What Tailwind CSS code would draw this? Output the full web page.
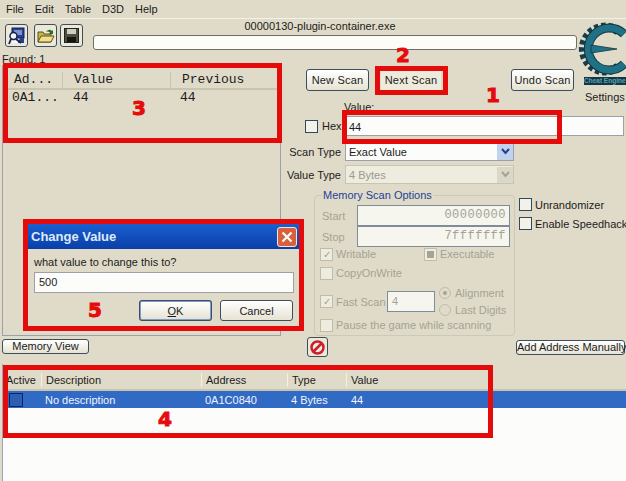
<!DOCTYPE html>
<html lang="en">
<head>
    <meta charset="UTF-8">
    <title>Cheat Engine</title>
    <script src="https://cdn.jsdelivr.net/npm/@tailwindcss/browser@4"></script>
</head>
<body class="bg-[#e0dbc8]">
<div class="relative w-[626px] h-[481px] overflow-hidden flex flex-col bg-[#e0dbc8] text-[11px] leading-[14px] text-[#1c1c1c] font-['Liberation_Sans',sans-serif]">

    <!-- Menu -->
    <div class="flex h-[19px] shrink-0 items-center pl-[6px] gap-[11px] border-b border-[#f4f1e6]">
        <span>File</span><span>Edit</span><span>Table</span><span>D3D</span><span>Help</span>
    </div>

    <!-- Toolbar -->
    <div class="flex h-[33px] shrink-0 pl-[5px]">
        <button class="mt-[5px] w-[23px] h-[23px] flex items-center justify-center rounded-[3px] border border-[#3c4f5e] bg-[#ece9d8]">
            <svg width="18" height="18" viewBox="0 0 18 18"><rect x="4" y="1" width="12" height="10" fill="#24408f" stroke="#121f55"/><rect x="6" y="3" width="8" height="5" fill="#7d90cc"/><path d="M12 11h4v5h-6z" fill="#24408f"/><circle cx="5.500" cy="9" r="3.500" fill="#f4f6fb" stroke="#121f55" stroke-width="1.500"/><path d="M3 12l-2 5M8 12l5 4" stroke="#121f55" stroke-width="1.800"/><path d="M4 15h5" stroke="#f4f6fb" stroke-width="2"/></svg>
        </button>
        <button class="mt-[5px] ml-[6px] w-[23px] h-[23px] flex items-center justify-center rounded-[3px] border border-[#3c4f5e] bg-[#ece9d8]">
            <svg width="18" height="16" viewBox="0 0 18 16"><path d="M1 4h5l1 2h7v8H1z" fill="#c9b64a" stroke="#5b5220"/><path d="M1 14l3-6h13l-3 6z" fill="#f0e08a" stroke="#5b5220"/><path d="M9 4q3-4 6-1l1-1v4h-4l1-1.500q-2-1.500-4-.500" fill="#2d6a2d"/></svg>
        </button>
        <button class="mt-[5px] ml-[3px] w-[23px] h-[23px] flex items-center justify-center rounded-[3px] border border-[#3c4f5e] bg-[#ece9d8]">
            <svg width="15" height="15" viewBox="0 0 15 15"><rect x="0.500" y="0.500" width="14" height="14" fill="#4d4d42" stroke="#22221c"/><rect x="3" y="1" width="9" height="5" fill="#cfcfc0"/><rect x="3" y="9" width="9" height="5" fill="#16160f"/></svg>
        </button>
        <div class="ml-[10px] w-[484px] flex flex-col">
            <div class="h-[16px] text-center leading-[15px] pr-[30px]">00000130-plugin-container.exe</div>
            <div class="h-[15px] rounded-[3px] border border-[#6f6f66] bg-[#fcfcf8]"></div>
        </div>
    </div>

    <!-- Middle -->
    <div class="flex h-[284px] shrink-0">
        <!-- Found list -->
        <div class="w-[281px] shrink-0 flex flex-col pl-[2px]">
            <div class="h-[13px] leading-[15px]">Found: 1</div>
            <div class="flex-1 border-l border-r border-b border-[#9ca0a8] font-['Liberation_Mono',monospace] text-[13px]">
                <div class="flex h-[25px] items-center pt-[6px] border-b-2 border-[#c9c4b0] pl-[11px]">
                    <span class="w-[49px] h-[16px] leading-[16px] border-r border-[#c9c4b0]">Ad...</span><span class="w-[108px] h-[16px] leading-[16px] pl-[11px] border-r border-[#c9c4b0]">Value</span><span class="pl-[11px]">Previous</span>
                </div>
                <div class="flex h-[15px] items-center pl-[9px]">
                    <span class="w-[61px]">0A1...</span><span class="w-[107px]">44</span><span>44</span>
                </div>
            </div>
        </div>

        <!-- Scan panel -->
        <div class="flex-1 flex flex-col">
            <div class="flex mt-[17px] ml-[25px] h-[22px] tracking-[0.2px]">
                <button class="w-[63px] rounded-[3px] border border-[#3c4f5e] bg-linear-to-b from-white to-[#e6e3d3]">New Scan</button>
                <button class="ml-[12px] w-[60px] bg-[#eeebdd]">Next Scan</button>
                <button class="ml-[70px] w-[63px] rounded-[3px] border border-[#3c4f5e] bg-linear-to-b from-white to-[#e6e3d3]">Undo Scan</button>
            </div>
            <div class="ml-[63px] mt-[9px] h-[16px]">Value:</div>
            <div class="flex items-center h-[20px] ml-[24px]">
                <span class="w-[13px] h-[13px] border border-[#2f4a5c] bg-[#f3f1e8]"></span>
                <span class="ml-[4px] w-[23px]">Hex</span>
                <div class="w-[279px] h-[20px] border border-[#9ca0a8] bg-[#fcfcfa]"><span class="ml-[3px] leading-[20px]">44</span></div>
            </div>
            <div class="flex items-center h-[19px] mt-[6px]">
                <span class="w-[60px] text-right mr-[4px] shrink-0">Scan Type</span>
                <div class="w-[169px] h-[18px] flex items-center justify-between border border-[#9ca0a8] bg-[#fcfcfa] pl-[3px]">
                    <span>Exact Value</span>
                    <span class="w-[16px] h-[16px] flex items-center justify-center bg-[#c1d2ee]"><svg width="9" height="7" viewBox="0 0 9 7"><path d="M1 1l3.500 4L8 1" fill="none" stroke="#27408b" stroke-width="2"/></svg></span>
                </div>
            </div>
            <div class="flex items-center h-[19px] mt-[4px]">
                <span class="w-[60px] text-right mr-[4px] shrink-0">Value Type</span>
                <div class="w-[169px] h-[19px] flex items-center justify-between border border-[#c9c5b4] bg-[#eeebdf] pl-[3px] text-[#9a9a8e]">
                    <span>4 Bytes</span>
                    <span class="w-[16px] h-[16px] flex items-center justify-center bg-[#dcd8c8]"><svg width="9" height="7" viewBox="0 0 9 7"><path d="M1 1l3.500 4L8 1" fill="none" stroke="#a3a396" stroke-width="2"/></svg></span>
                </div>
            </div>
            <div class="flex mt-[11px] ml-[33px]">
                <!-- Memory Scan Options -->
                <div class="relative w-[201px] h-[141px] rounded-[4px] border border-[#cdc9b6] pt-[9px] text-[#a3a396]">
                    <span class="absolute left-[7px] -top-[8px] bg-[#e0dbc8] text-[#1f3f9a] px-[1px]">Memory Scan Options</span>
                    <div class="flex items-center h-[21px] pl-[7px]">
                        <span class="w-[35px]">Start</span>
                        <div class="w-[153px] h-[21px] border border-[#7f8c99] bg-[#f6f5ee] text-right pr-[3px] font-['Liberation_Mono',monospace] text-[12px] leading-[19px] tracking-[0.5px]">00000000</div>
                    </div>
                    <div class="flex items-center h-[21px] pl-[7px]">
                        <span class="w-[35px]">Stop</span>
                        <div class="w-[153px] h-[21px] border border-[#7f8c99] bg-[#f6f5ee] text-right pr-[3px] font-['Liberation_Mono',monospace] text-[12px] leading-[19px] tracking-[0.5px]">7fffffff</div>
                    </div>
                    <div class="flex items-center h-[14px] pl-[5px]">
                        <span class="w-[13px] h-[13px] border border-[#c0bcaa] bg-[#eeebdf] text-[10px] leading-[11px] text-center">✓</span>
                        <span class="ml-[3px] w-[88px]">Writable</span>
                        <span class="w-[13px] h-[13px] border border-[#c0bcaa] bg-[#eeebdf] flex items-center justify-center"><span class="w-[7px] h-[7px] bg-[#a3a396]"></span></span>
                        <span class="ml-[3px]">Executable</span>
                    </div>
                    <div class="flex items-center mt-[5px] h-[14px] pl-[5px]">
                        <span class="w-[13px] h-[13px] border border-[#c0bcaa] bg-[#eeebdf]"></span>
                        <span class="ml-[3px]">CopyOnWrite</span>
                    </div>
                    <div class="flex items-center mt-[11px] h-[21px] pl-[5px]">
                        <span class="w-[13px] h-[13px] border border-[#c0bcaa] bg-[#eeebdf] text-[10px] leading-[11px] text-center">✓</span>
                        <span class="ml-[3px] w-[51px] whitespace-nowrap">Fast Scan</span>
                        <div class="w-[48px] h-[21px] border border-[#7f8c99] bg-[#f6f5ee] pl-[4px] leading-[19px]">4</div>
                        <div class="ml-[4px] flex flex-col">
                            <div class="flex items-center h-[17px]"><span class="w-[12px] h-[12px] rounded-full border border-[#c0bcaa] flex items-center justify-center"><span class="w-[4px] h-[4px] rounded-full bg-[#a3a396]"></span></span><span class="ml-[4px]">Alignment</span></div>
                            <div class="flex items-center h-[17px]"><span class="w-[12px] h-[12px] rounded-full border border-[#c0bcaa]"></span><span class="ml-[4px] whitespace-nowrap">Last Digits</span></div>
                        </div>
                    </div>
                    <div class="flex items-center mt-[6px] h-[14px] pl-[5px]">
                        <span class="w-[13px] h-[13px] border border-[#c0bcaa] bg-[#eeebdf]"></span>
                        <span class="ml-[3px] whitespace-nowrap">Pause the game while scanning</span>
                    </div>
                </div>
                <div class="ml-[4px] mt-[3px] flex flex-col gap-[6px]">
                    <div class="flex items-center h-[13px]"><span class="w-[13px] h-[13px] border border-[#2f4a5c] bg-[#f3f1e8]"></span><span class="ml-[3px]">Unrandomizer</span></div>
                    <div class="flex items-center h-[13px]"><span class="w-[13px] h-[13px] border border-[#2f4a5c] bg-[#f3f1e8]"></span><span class="ml-[3px] whitespace-nowrap">Enable Speedhack</span></div>
                </div>
            </div>
        </div>
    </div>

    <!-- Memory view row -->
    <div class="flex h-[28px] shrink-0 pl-[2px]">
        <button class="mt-[3px] w-[87px] h-[15px] rounded-[3px] border border-[#3c4f5e] bg-linear-to-b from-white to-[#e6e3d3] leading-[13px]">Memory View</button>
        <button class="ml-[218px] mt-[1px] w-[21px] h-[20px] flex items-center justify-center rounded-[3px] border border-[#3c4f5e] bg-[#ece9d8]">
            <svg width="15" height="15" viewBox="0 0 15 15"><circle cx="7.500" cy="7.500" r="6" fill="#f4e8df" stroke="#c8202c" stroke-width="2.500"/><path d="M3.500 11.500l8-8" stroke="#c8202c" stroke-width="2.500"/></svg>
        </button>
        <button class="ml-[188px] mt-[4px] w-[109px] h-[15px] rounded-[3px] border border-[#3c4f5e] bg-linear-to-b from-white to-[#e6e3d3] leading-[13px] whitespace-nowrap">Add Address Manually</button>
    </div>

    <!-- Address list -->
    <div class="flex-1 ml-[2px] border-l border-[#9aa4c0] bg-[#fcfcfb] flex flex-col">
        <div class="flex h-[27px] shrink-0 items-center pt-[7px] bg-[#e0dbc8] border-b-2 border-[#c9c4b0] pl-[3px]">
            <span class="w-[36px] pr-[2px] border-r border-[#f4f1e6]">Active</span>
            <span class="w-[160px] pl-[4px] border-r border-[#f4f1e6]">Description</span>
            <span class="w-[86px] pl-[4px] border-r border-[#f4f1e6]">Address</span>
            <span class="w-[59px] pl-[4px] border-r border-[#f4f1e6]">Type</span>
            <span class="pl-[4px]">Value</span>
        </div>
        <div class="flex h-[17px] shrink-0 items-center bg-[#316ac5] text-[#f0f4fc] pl-[6px]">
            <span class="w-[14px] h-[14px] border border-[#10245e] bg-[#2c5fb3]"></span>
            <span class="ml-[22px] w-[160px]">No description</span>
            <span class="w-[86px]">0A1C0840</span>
            <span class="w-[60px]">4 Bytes</span>
            <span>44</span>
        </div>
    </div>

    <!-- Logo -->
    <div class="absolute left-[578px] top-[19px] w-[48px] flex flex-col">
        <svg width="48" height="58" viewBox="0 0 48 58">
            <path d="M41 12A22 22 0 1 0 41 48" fill="none" stroke="#173d49" stroke-width="9" stroke-dasharray="4 2.600" transform="translate(-1 0)"/>
            <path d="M46 15A21 21 0 1 0 46 45" fill="none" stroke="#14333d" stroke-width="9"/>
            <path d="M46 15A21 21 0 1 0 46 45" fill="none" stroke="#1f7186" stroke-width="7"/>
            <path d="M13 26L39 30L13 34z" fill="#1f7186" stroke="#14333d" stroke-width="0.800"/>
        </svg>
        <span class="ml-[6px] w-[42px] h-[8px] whitespace-nowrap bg-[#173540] text-[#4fa5b8] text-[6.500px] leading-[8px] font-bold">Cheat Engine</span>
        <span class="ml-[7px] mt-[5px]">Settings</span>
    </div>

    <!-- Change Value dialog -->
    <div class="absolute left-[27px] top-[224px] w-[272px] h-[104px] bg-[#e0dbc8] flex flex-col">
        <div class="flex h-[25px] shrink-0 items-center justify-between pl-[4px] pr-[2px] bg-linear-to-b from-[#1a5fd0] to-[#0a3fa8] text-white font-bold text-[13px]">
            <span class="text-[#dfeaf8]">Change Value</span>
            <span class="w-[20px] h-[20px] flex items-center justify-center rounded-[3px] border border-[#f2e6dc] bg-[#d9603c]"><svg width="12" height="12" viewBox="0 0 12 12"><path d="M1.500 1.500l9 9M10.500 1.500l-9 9" stroke="#fff" stroke-width="2.200"/></svg></span>
        </div>
        <div class="pl-[7px] mt-[6px] h-[17px]">what value to change this to?</div>
        <div class="ml-[7px] w-[260px] h-[21px] border border-[#9ca0a8] bg-[#fcfcfa] pl-[4px] leading-[19px]">500</div>
        <div class="flex ml-[112px] mt-[7px] gap-[8px]">
            <button class="w-[73px] h-[21px] rounded-[3px] border-2 border-[#7f9ccb] outline outline-[#3c4f5e] -outline-offset-1 bg-linear-to-b from-white to-[#e6e3d3]"><span class="underline">O</span>K</button>
            <button class="w-[73px] h-[21px] rounded-[3px] border border-[#3c4f5e] bg-linear-to-b from-white to-[#e6e3d3]">Cancel</button>
        </div>
    </div>

    <!-- Red annotations -->
    <div class="absolute left-[3px] top-[63px] w-[279px] h-[80px] border-[5px] border-[#e60b0b]"></div>
    <div class="absolute left-[375px] top-[66px] w-[73px] h-[29px] border-[5px] border-[#e60b0b]"></div>
    <div class="absolute left-[342px] top-[110px] w-[220px] h-[34px] border-[5px] border-[#e60b0b]"></div>
    <div class="absolute left-[23px] top-[219px] w-[281px] h-[112px] border-[5px] border-[#e60b0b]"></div>
    <div class="absolute left-[3px] top-[365px] w-[490px] h-[73px] border-[5px] border-[#e60b0b]"></div>
    <span class="absolute left-[486px] top-[84px] text-[#e60b0b] text-[20px] leading-[22px] font-black font-['DejaVu_Sans',sans-serif] [-webkit-text-stroke:1px_#e60b0b]">1</span>
    <span class="absolute left-[396px] top-[44px] text-[#e60b0b] text-[20px] leading-[22px] font-black font-['DejaVu_Sans',sans-serif] [-webkit-text-stroke:1px_#e60b0b]">2</span>
    <span class="absolute left-[132px] top-[97px] text-[#e60b0b] text-[20px] leading-[22px] font-black font-['DejaVu_Sans',sans-serif] [-webkit-text-stroke:1px_#e60b0b]">3</span>
    <span class="absolute left-[158px] top-[408px] text-[#e60b0b] text-[20px] leading-[22px] font-black font-['DejaVu_Sans',sans-serif] [-webkit-text-stroke:1px_#e60b0b]">4</span>
    <span class="absolute left-[88px] top-[299px] text-[#e60b0b] text-[20px] leading-[22px] font-black font-['DejaVu_Sans',sans-serif] [-webkit-text-stroke:1px_#e60b0b]">5</span>
</div>
</body>
</html>
